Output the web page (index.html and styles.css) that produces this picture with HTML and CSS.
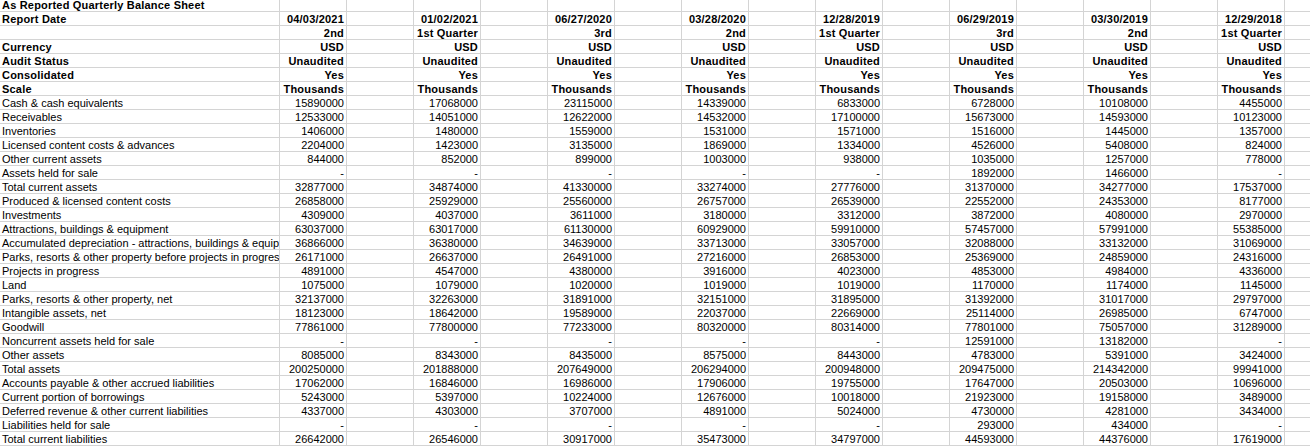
FILE: index.html
```html
<!DOCTYPE html>
<html>
<head>
<meta charset="utf-8">
<link rel="stylesheet" href="styles.css">
</head>
<body>
<div class="sheet">
<div class="row hdr"><div class="c lbl">As Reported Quarterly Balance Sheet</div><div class="c"></div><div class="c"></div><div class="c"></div><div class="c"></div><div class="c"></div><div class="c"></div><div class="c"></div><div class="c"></div><div class="c"></div><div class="c"></div><div class="c"></div><div class="c"></div><div class="c"></div><div class="c"></div><div class="c"></div><div class="c"></div></div>
<div class="row hdr"><div class="c lbl">Report Date</div><div class="c">04/03/2021</div><div class="c"></div><div class="c">01/02/2021</div><div class="c"></div><div class="c">06/27/2020</div><div class="c"></div><div class="c">03/28/2020</div><div class="c"></div><div class="c">12/28/2019</div><div class="c"></div><div class="c">06/29/2019</div><div class="c"></div><div class="c">03/30/2019</div><div class="c"></div><div class="c">12/29/2018</div><div class="c"></div></div>
<div class="row hdr"><div class="c lbl"></div><div class="c">2nd</div><div class="c"></div><div class="c">1st Quarter</div><div class="c"></div><div class="c">3rd</div><div class="c"></div><div class="c">2nd</div><div class="c"></div><div class="c">1st Quarter</div><div class="c"></div><div class="c">3rd</div><div class="c"></div><div class="c">2nd</div><div class="c"></div><div class="c">1st Quarter</div><div class="c"></div></div>
<div class="row hdr"><div class="c lbl">Currency</div><div class="c">USD</div><div class="c"></div><div class="c">USD</div><div class="c"></div><div class="c">USD</div><div class="c"></div><div class="c">USD</div><div class="c"></div><div class="c">USD</div><div class="c"></div><div class="c">USD</div><div class="c"></div><div class="c">USD</div><div class="c"></div><div class="c">USD</div><div class="c"></div></div>
<div class="row hdr"><div class="c lbl">Audit Status</div><div class="c">Unaudited</div><div class="c"></div><div class="c">Unaudited</div><div class="c"></div><div class="c">Unaudited</div><div class="c"></div><div class="c">Unaudited</div><div class="c"></div><div class="c">Unaudited</div><div class="c"></div><div class="c">Unaudited</div><div class="c"></div><div class="c">Unaudited</div><div class="c"></div><div class="c">Unaudited</div><div class="c"></div></div>
<div class="row hdr"><div class="c lbl">Consolidated</div><div class="c">Yes</div><div class="c"></div><div class="c">Yes</div><div class="c"></div><div class="c">Yes</div><div class="c"></div><div class="c">Yes</div><div class="c"></div><div class="c">Yes</div><div class="c"></div><div class="c">Yes</div><div class="c"></div><div class="c">Yes</div><div class="c"></div><div class="c">Yes</div><div class="c"></div></div>
<div class="row hdr"><div class="c lbl">Scale</div><div class="c">Thousands</div><div class="c"></div><div class="c">Thousands</div><div class="c"></div><div class="c">Thousands</div><div class="c"></div><div class="c">Thousands</div><div class="c"></div><div class="c">Thousands</div><div class="c"></div><div class="c">Thousands</div><div class="c"></div><div class="c">Thousands</div><div class="c"></div><div class="c">Thousands</div><div class="c"></div></div>
<div class="row"><div class="c lbl">Cash &amp; cash equivalents</div><div class="c">15890000</div><div class="c"></div><div class="c">17068000</div><div class="c"></div><div class="c">23115000</div><div class="c"></div><div class="c">14339000</div><div class="c"></div><div class="c">6833000</div><div class="c"></div><div class="c">6728000</div><div class="c"></div><div class="c">10108000</div><div class="c"></div><div class="c">4455000</div><div class="c"></div></div>
<div class="row"><div class="c lbl">Receivables</div><div class="c">12533000</div><div class="c"></div><div class="c">14051000</div><div class="c"></div><div class="c">12622000</div><div class="c"></div><div class="c">14532000</div><div class="c"></div><div class="c">17100000</div><div class="c"></div><div class="c">15673000</div><div class="c"></div><div class="c">14593000</div><div class="c"></div><div class="c">10123000</div><div class="c"></div></div>
<div class="row"><div class="c lbl">Inventories</div><div class="c">1406000</div><div class="c"></div><div class="c">1480000</div><div class="c"></div><div class="c">1559000</div><div class="c"></div><div class="c">1531000</div><div class="c"></div><div class="c">1571000</div><div class="c"></div><div class="c">1516000</div><div class="c"></div><div class="c">1445000</div><div class="c"></div><div class="c">1357000</div><div class="c"></div></div>
<div class="row"><div class="c lbl">Licensed content costs &amp; advances</div><div class="c">2204000</div><div class="c"></div><div class="c">1423000</div><div class="c"></div><div class="c">3135000</div><div class="c"></div><div class="c">1869000</div><div class="c"></div><div class="c">1334000</div><div class="c"></div><div class="c">4526000</div><div class="c"></div><div class="c">5408000</div><div class="c"></div><div class="c">824000</div><div class="c"></div></div>
<div class="row"><div class="c lbl">Other current assets</div><div class="c">844000</div><div class="c"></div><div class="c">852000</div><div class="c"></div><div class="c">899000</div><div class="c"></div><div class="c">1003000</div><div class="c"></div><div class="c">938000</div><div class="c"></div><div class="c">1035000</div><div class="c"></div><div class="c">1257000</div><div class="c"></div><div class="c">778000</div><div class="c"></div></div>
<div class="row"><div class="c lbl">Assets held for sale</div><div class="c">-</div><div class="c"></div><div class="c">-</div><div class="c"></div><div class="c">-</div><div class="c"></div><div class="c">-</div><div class="c"></div><div class="c">-</div><div class="c"></div><div class="c">1892000</div><div class="c"></div><div class="c">1466000</div><div class="c"></div><div class="c">-</div><div class="c"></div></div>
<div class="row"><div class="c lbl">Total current assets</div><div class="c">32877000</div><div class="c"></div><div class="c">34874000</div><div class="c"></div><div class="c">41330000</div><div class="c"></div><div class="c">33274000</div><div class="c"></div><div class="c">27776000</div><div class="c"></div><div class="c">31370000</div><div class="c"></div><div class="c">34277000</div><div class="c"></div><div class="c">17537000</div><div class="c"></div></div>
<div class="row"><div class="c lbl">Produced &amp; licensed content costs</div><div class="c">26858000</div><div class="c"></div><div class="c">25929000</div><div class="c"></div><div class="c">25560000</div><div class="c"></div><div class="c">26757000</div><div class="c"></div><div class="c">26539000</div><div class="c"></div><div class="c">22552000</div><div class="c"></div><div class="c">24353000</div><div class="c"></div><div class="c">8177000</div><div class="c"></div></div>
<div class="row"><div class="c lbl">Investments</div><div class="c">4309000</div><div class="c"></div><div class="c">4037000</div><div class="c"></div><div class="c">3611000</div><div class="c"></div><div class="c">3180000</div><div class="c"></div><div class="c">3312000</div><div class="c"></div><div class="c">3872000</div><div class="c"></div><div class="c">4080000</div><div class="c"></div><div class="c">2970000</div><div class="c"></div></div>
<div class="row"><div class="c lbl">Attractions, buildings &amp; equipment</div><div class="c">63037000</div><div class="c"></div><div class="c">63017000</div><div class="c"></div><div class="c">61130000</div><div class="c"></div><div class="c">60929000</div><div class="c"></div><div class="c">59910000</div><div class="c"></div><div class="c">57457000</div><div class="c"></div><div class="c">57991000</div><div class="c"></div><div class="c">55385000</div><div class="c"></div></div>
<div class="row"><div class="c lbl">Accumulated depreciation - attractions, buildings &amp; equipment</div><div class="c">36866000</div><div class="c"></div><div class="c">36380000</div><div class="c"></div><div class="c">34639000</div><div class="c"></div><div class="c">33713000</div><div class="c"></div><div class="c">33057000</div><div class="c"></div><div class="c">32088000</div><div class="c"></div><div class="c">33132000</div><div class="c"></div><div class="c">31069000</div><div class="c"></div></div>
<div class="row"><div class="c lbl">Parks, resorts &amp; other property before projects in progress</div><div class="c">26171000</div><div class="c"></div><div class="c">26637000</div><div class="c"></div><div class="c">26491000</div><div class="c"></div><div class="c">27216000</div><div class="c"></div><div class="c">26853000</div><div class="c"></div><div class="c">25369000</div><div class="c"></div><div class="c">24859000</div><div class="c"></div><div class="c">24316000</div><div class="c"></div></div>
<div class="row"><div class="c lbl">Projects in progress</div><div class="c">4891000</div><div class="c"></div><div class="c">4547000</div><div class="c"></div><div class="c">4380000</div><div class="c"></div><div class="c">3916000</div><div class="c"></div><div class="c">4023000</div><div class="c"></div><div class="c">4853000</div><div class="c"></div><div class="c">4984000</div><div class="c"></div><div class="c">4336000</div><div class="c"></div></div>
<div class="row"><div class="c lbl">Land</div><div class="c">1075000</div><div class="c"></div><div class="c">1079000</div><div class="c"></div><div class="c">1020000</div><div class="c"></div><div class="c">1019000</div><div class="c"></div><div class="c">1019000</div><div class="c"></div><div class="c">1170000</div><div class="c"></div><div class="c">1174000</div><div class="c"></div><div class="c">1145000</div><div class="c"></div></div>
<div class="row"><div class="c lbl">Parks, resorts &amp; other property, net</div><div class="c">32137000</div><div class="c"></div><div class="c">32263000</div><div class="c"></div><div class="c">31891000</div><div class="c"></div><div class="c">32151000</div><div class="c"></div><div class="c">31895000</div><div class="c"></div><div class="c">31392000</div><div class="c"></div><div class="c">31017000</div><div class="c"></div><div class="c">29797000</div><div class="c"></div></div>
<div class="row"><div class="c lbl">Intangible assets, net</div><div class="c">18123000</div><div class="c"></div><div class="c">18642000</div><div class="c"></div><div class="c">19589000</div><div class="c"></div><div class="c">22037000</div><div class="c"></div><div class="c">22669000</div><div class="c"></div><div class="c">25114000</div><div class="c"></div><div class="c">26985000</div><div class="c"></div><div class="c">6747000</div><div class="c"></div></div>
<div class="row"><div class="c lbl">Goodwill</div><div class="c">77861000</div><div class="c"></div><div class="c">77800000</div><div class="c"></div><div class="c">77233000</div><div class="c"></div><div class="c">80320000</div><div class="c"></div><div class="c">80314000</div><div class="c"></div><div class="c">77801000</div><div class="c"></div><div class="c">75057000</div><div class="c"></div><div class="c">31289000</div><div class="c"></div></div>
<div class="row"><div class="c lbl">Noncurrent assets held for sale</div><div class="c">-</div><div class="c"></div><div class="c">-</div><div class="c"></div><div class="c">-</div><div class="c"></div><div class="c">-</div><div class="c"></div><div class="c">-</div><div class="c"></div><div class="c">12591000</div><div class="c"></div><div class="c">13182000</div><div class="c"></div><div class="c">-</div><div class="c"></div></div>
<div class="row"><div class="c lbl">Other assets</div><div class="c">8085000</div><div class="c"></div><div class="c">8343000</div><div class="c"></div><div class="c">8435000</div><div class="c"></div><div class="c">8575000</div><div class="c"></div><div class="c">8443000</div><div class="c"></div><div class="c">4783000</div><div class="c"></div><div class="c">5391000</div><div class="c"></div><div class="c">3424000</div><div class="c"></div></div>
<div class="row"><div class="c lbl">Total assets</div><div class="c">200250000</div><div class="c"></div><div class="c">201888000</div><div class="c"></div><div class="c">207649000</div><div class="c"></div><div class="c">206294000</div><div class="c"></div><div class="c">200948000</div><div class="c"></div><div class="c">209475000</div><div class="c"></div><div class="c">214342000</div><div class="c"></div><div class="c">99941000</div><div class="c"></div></div>
<div class="row"><div class="c lbl">Accounts payable &amp; other accrued liabilities</div><div class="c">17062000</div><div class="c"></div><div class="c">16846000</div><div class="c"></div><div class="c">16986000</div><div class="c"></div><div class="c">17906000</div><div class="c"></div><div class="c">19755000</div><div class="c"></div><div class="c">17647000</div><div class="c"></div><div class="c">20503000</div><div class="c"></div><div class="c">10696000</div><div class="c"></div></div>
<div class="row"><div class="c lbl">Current portion of borrowings</div><div class="c">5243000</div><div class="c"></div><div class="c">5397000</div><div class="c"></div><div class="c">10224000</div><div class="c"></div><div class="c">12676000</div><div class="c"></div><div class="c">10018000</div><div class="c"></div><div class="c">21923000</div><div class="c"></div><div class="c">19158000</div><div class="c"></div><div class="c">3489000</div><div class="c"></div></div>
<div class="row"><div class="c lbl">Deferred revenue &amp; other current liabilities</div><div class="c">4337000</div><div class="c"></div><div class="c">4303000</div><div class="c"></div><div class="c">3707000</div><div class="c"></div><div class="c">4891000</div><div class="c"></div><div class="c">5024000</div><div class="c"></div><div class="c">4730000</div><div class="c"></div><div class="c">4281000</div><div class="c"></div><div class="c">3434000</div><div class="c"></div></div>
<div class="row"><div class="c lbl">Liabilities held for sale</div><div class="c">-</div><div class="c"></div><div class="c">-</div><div class="c"></div><div class="c">-</div><div class="c"></div><div class="c">-</div><div class="c"></div><div class="c">-</div><div class="c"></div><div class="c">293000</div><div class="c"></div><div class="c">434000</div><div class="c"></div><div class="c">-</div><div class="c"></div></div>
<div class="row"><div class="c lbl">Total current liabilities</div><div class="c">26642000</div><div class="c"></div><div class="c">26546000</div><div class="c"></div><div class="c">30917000</div><div class="c"></div><div class="c">35473000</div><div class="c"></div><div class="c">34797000</div><div class="c"></div><div class="c">44593000</div><div class="c"></div><div class="c">44376000</div><div class="c"></div><div class="c">17619000</div><div class="c"></div></div>
</div>
</body>
</html>
```

FILE: styles.css
```css
html, body {
  margin: 0;
  padding: 0;
  background: #ffffff;
  overflow: hidden;
}

.sheet {
  width: 1352px;
  margin-top: -2px;
  font-family: "Liberation Sans", Arial, sans-serif;
  font-size: 11px;
  color: #000000;
}

.row {
  display: grid;
  grid-template-columns: 280px repeat(16, 67px);
  height: 14px;
}

.c {
  box-sizing: border-box;
  height: 14px;
  border-right: 1px solid #d4d4d4;
  border-bottom: 1px solid #d4d4d4;
  padding: 1px 2px 0 2px;
  line-height: 12px;
  white-space: nowrap;
  overflow: hidden;
  text-align: right;
}

.c.lbl {
  text-align: left;
}

.hdr .c {
  font-weight: bold;
  letter-spacing: 0.2px;
}
```
